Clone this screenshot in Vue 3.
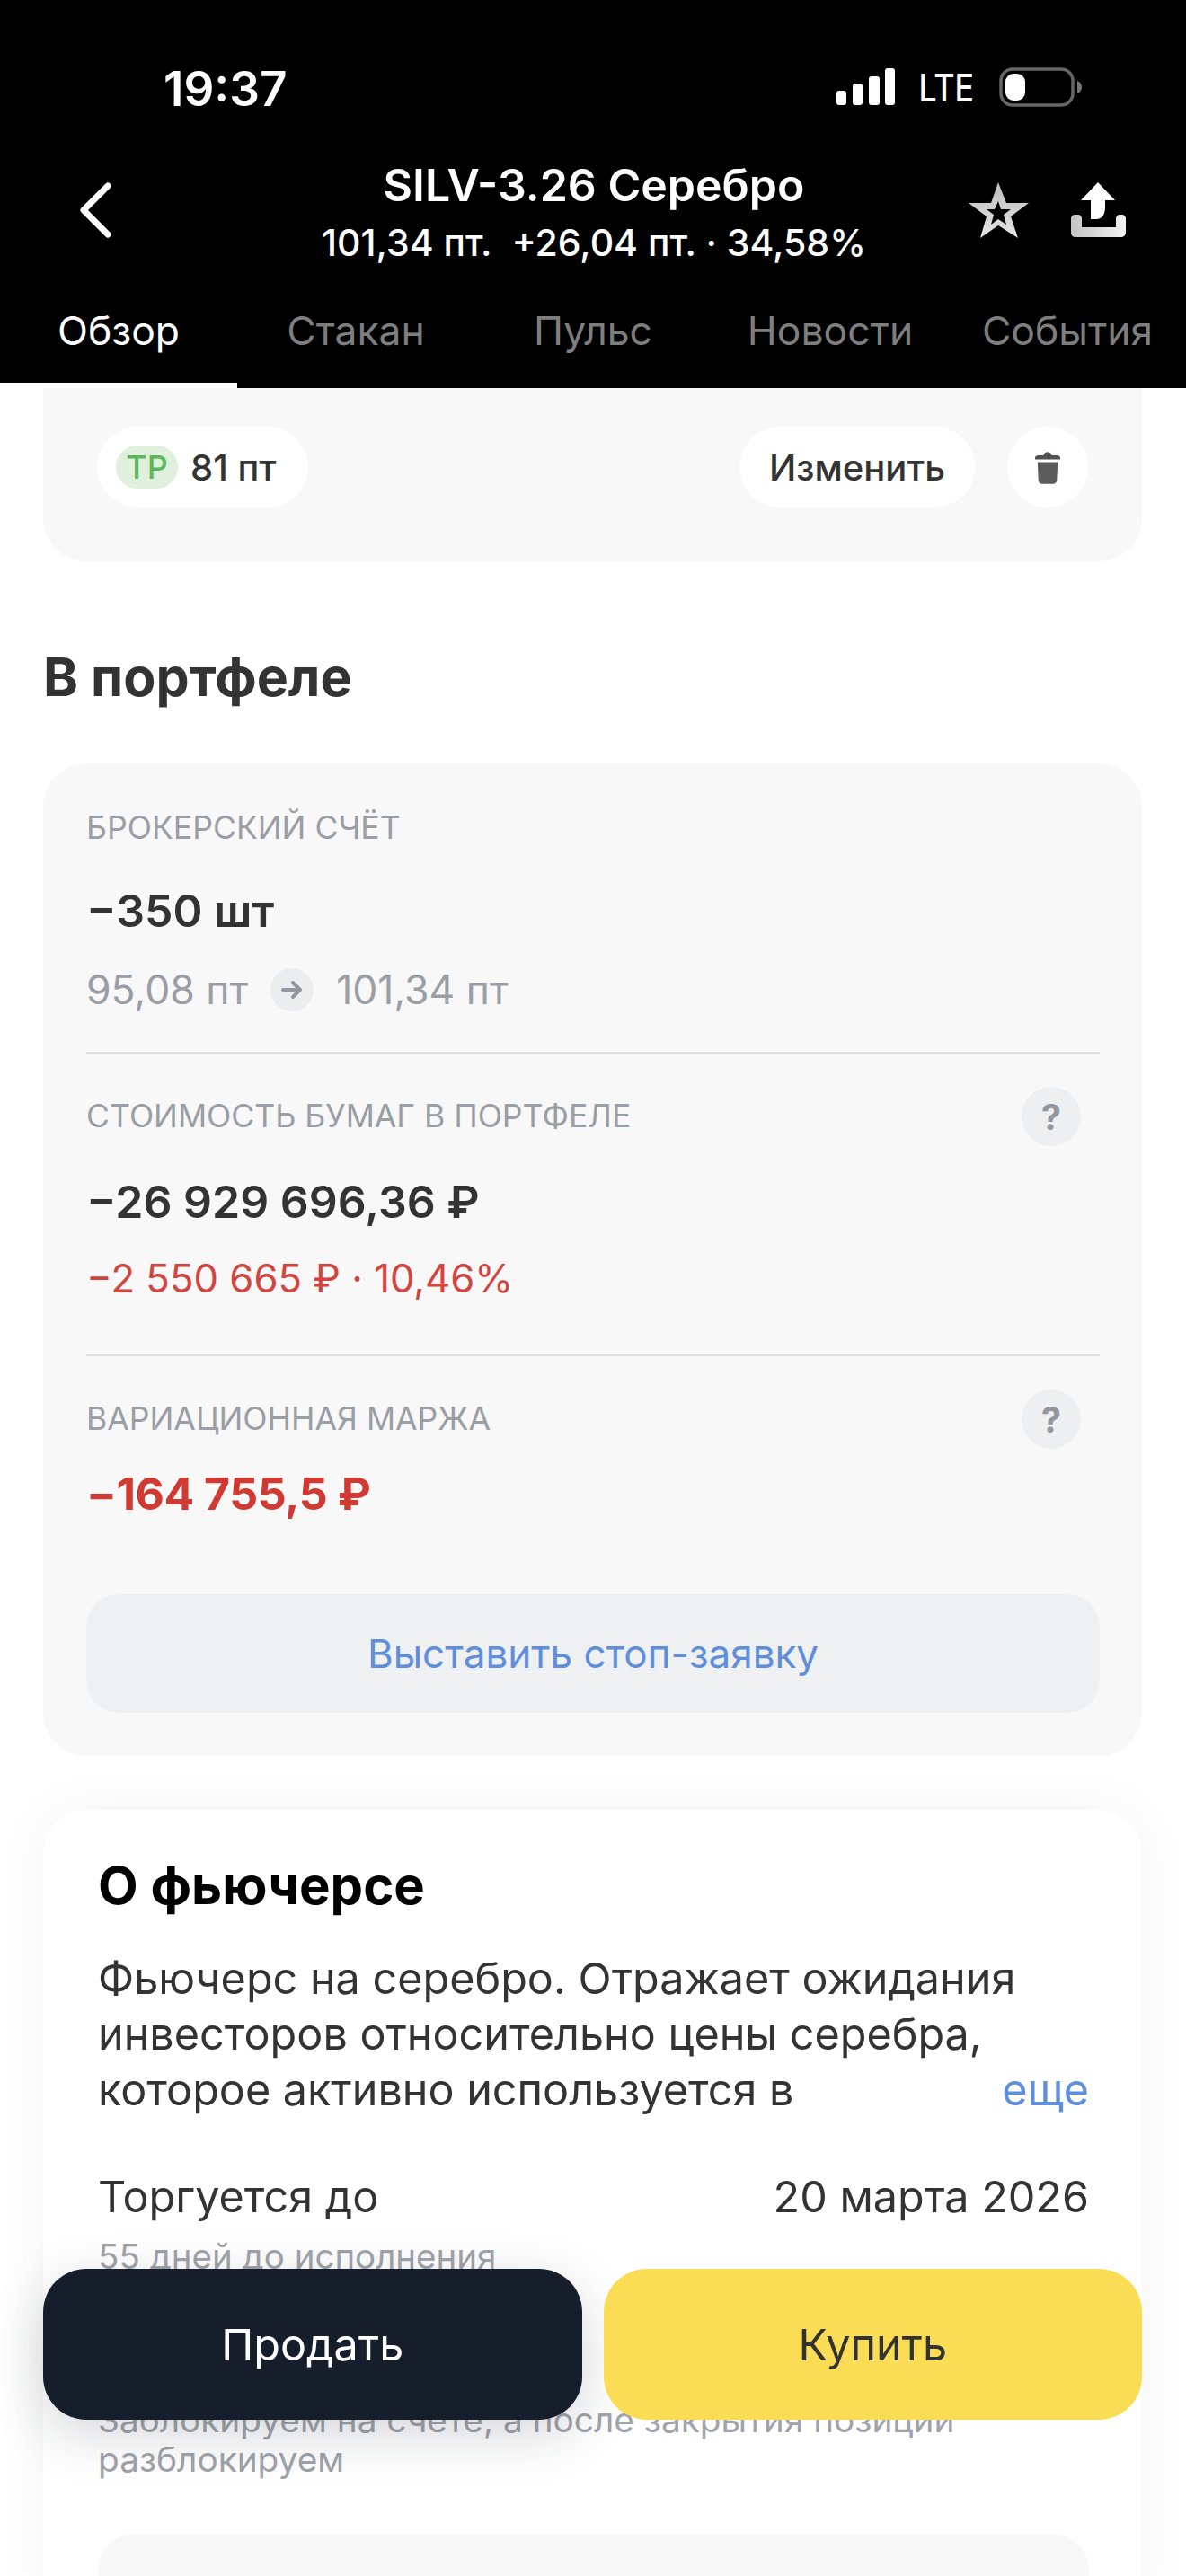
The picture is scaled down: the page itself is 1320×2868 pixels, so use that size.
<script setup>
const tabs = ['Обзор', 'Стакан', 'Пульс', 'Новости', 'События']
</script>

<template>
  <div class="phone">
    <header class="top">
      <div class="status">
        <span class="time">19:37</span>
        <div class="status-right">
          <svg class="signal" width="66" height="42" viewBox="0 0 66 42" fill="#fff">
            <rect x="0" y="25" width="11" height="16" rx="3" />
            <rect x="18" y="17" width="11" height="24" rx="3" />
            <rect x="36" y="9" width="12" height="32" rx="3" />
            <rect x="54" y="0" width="11" height="41" rx="3" />
          </svg>
          <span class="lte">LTE</span>
          <svg class="battery" width="92" height="44" viewBox="0 0 92 44">
            <rect x="2" y="2" width="80" height="40" rx="13" fill="none" stroke="#666" stroke-width="3.5" />
            <rect x="7" y="7" width="22" height="30" rx="9" fill="#fff" />
            <path d="M87 15c3 1 5 4 5 7s-2 6-5 7z" fill="#777" />
          </svg>
        </div>
      </div>
      <div class="nav">
        <svg class="back" width="36" height="62" viewBox="0 0 36 62" fill="none">
          <path d="M32 4 5 31l27 27" stroke="#fff" stroke-width="7" stroke-linecap="round" stroke-linejoin="round" />
        </svg>
        <div class="titles">
          <div class="title">SILV-3.26 Серебро</div>
          <div class="subtitle">101,34 пт.&nbsp; +26,04 пт. · 34,58%</div>
        </div>
        <svg class="star" width="68" height="64" viewBox="0 0 68 64">
          <defs>
            <linearGradient id="starFill" x1="0.5" y1="0" x2="0.5" y2="1">
              <stop offset="0" stop-color="#bdbdbd" />
              <stop offset="1" stop-color="#e6e6e6" />
            </linearGradient>
          </defs>
          <path fill="url(#starFill)" fill-rule="evenodd" d="M33 1l9 23h25L47 39l8 24-22-14-20 14 7-24L0 24h25zM33 22l-4 9H20l8 6-3 11 8-6 9 6-3-11 8-6h-11z" />
        </svg>
        <svg class="share" width="62" height="62" viewBox="0 0 62 62">
          <defs>
            <linearGradient id="trayFill" x1="0" y1="0" x2="1" y2="0">
              <stop offset="0" stop-color="#c4c4c4" />
              <stop offset="1" stop-color="#f2f2f2" />
            </linearGradient>
          </defs>
          <path fill="#fff" d="M30 0l19 20H38v8c0 7-3 13-10 13h-6V20H11z" />
          <path fill="url(#trayFill)" d="M4 36h4c2 0 4 2 4 4v10h38V40c0-2 2-4 4-4h3c2 0 4 2 4 4v16c0 3-3 5-5 5H5c-3 0-5-2-5-5V40c0-2 2-4 4-4z" />
        </svg>
      </div>
      <nav class="tabs">
        <span v-for="(tab, i) in tabs" :key="tab" class="tab" :class="{ active: i === 0 }">{{ tab }}</span>
      </nav>
    </header>

    <main class="content">
      <section class="card order">
        <div class="pill tp"><span class="tp-badge">ТР</span>81 пт</div>
        <div class="order-actions">
          <button class="pill edit">Изменить</button>
          <button class="pill trash">
            <svg width="28" height="38" viewBox="0 0 30 40">
              <path fill="#505050" d="M0 9c0-2 2-3 4-3h6c1-3 3-4 5-4s4 1 5 4h6c2 0 4 1 4 3v2H0z" />
              <path fill="#5c5c5c" d="M3 14h24l-1 22c0 2-2 4-4 4H8c-2 0-4-2-4-4z" />
            </svg>
          </button>
        </div>
      </section>

      <h2 class="section-title">В портфеле</h2>

      <section class="card portfolio">
        <div class="block first">
          <div class="label">БРОКЕРСКИЙ СЧЁТ</div>
          <div class="value">−350 шт</div>
          <div class="prices">
            <span>95,08 пт</span>
            <span class="arrow">
              <svg width="24" height="24" viewBox="0 0 24 24" fill="none">
                <path d="M2 12h18M13 4l8 8-8 8" stroke="#92969d" stroke-width="4" stroke-linecap="round" stroke-linejoin="round" />
              </svg>
            </span>
            <span>101,34 пт</span>
          </div>
        </div>
        <div class="block">
          <div class="label-row">
            <span class="label">СТОИМОСТЬ БУМАГ В ПОРТФЕЛЕ</span>
            <span class="hint">?</span>
          </div>
          <div class="value">−26 929 696,36 ₽</div>
          <div class="change">−2 550 665 ₽ · 10,46%</div>
        </div>
        <div class="block last">
          <div class="label-row">
            <span class="label">ВАРИАЦИОННАЯ МАРЖА</span>
            <span class="hint">?</span>
          </div>
          <div class="value red">−164 755,5 ₽</div>
        </div>
        <button class="stop">Выставить стоп-заявку</button>
      </section>

      <section class="card about">
        <h2 class="about-title">О фьючерсе</h2>
        <div class="desc">
          <p>Фьючерс на серебро. Отражает ожидания<br />инвесторов относительно цены серебра,</p>
          <p class="desc-last"><span>которое активно используется в</span><span class="more">еще</span></p>
        </div>
        <div class="term">
          <span>Торгуется до</span>
          <span>20 марта 2026</span>
        </div>
        <div class="note days">55 дней до исполнения</div>
        <div class="note blocked">Заблокируем на счёте, а после закрытия позиции<br />разблокируем</div>
        <div class="inner-box"></div>
      </section>
    </main>

    <div class="actions">
      <button class="action sell">Продать</button>
      <button class="action buy">Купить</button>
    </div>
  </div>
</template>

<style>
html, body { margin: 0; background: #fff; }
</style>

<style scoped>
.phone {
  position: relative;
  width: 1320px;
  height: 2868px;
  overflow: hidden;
  background: #fff;
  font-family: Inter, "Liberation Sans", sans-serif;
  color: #333;
}
button {
  border: 0;
  padding: 0;
  font-family: inherit;
}

/* header */
.top {
  height: 432px;
  background: #000;
  color: #fff;
  box-sizing: border-box;
  padding-top: 74px;
}
.status {
  height: 46px;
  display: flex;
  justify-content: space-between;
  align-items: center;
  padding: 0 116px 0 182px;
}
.time { font-size: 53px; font-weight: 600; position: relative; top: 2px; }
.status-right { display: flex; align-items: center; }
.lte { font-size: 42px; font-weight: 500; margin: 0 22px 0 20px; transform: scaleX(.85); }
.nav {
  display: flex;
  align-items: center;
  height: 124px;
  margin-top: 57px;
  padding: 0 66px 0 88px;
}
.back, .star, .share { margin-bottom: 10px; }
.titles { flex: 1; text-align: center; padding-left: 120px; white-space: nowrap; }
.title { font-size: 50px; font-weight: 600; line-height: 62px; margin-top: -2px; }
.subtitle { font-size: 41px; font-weight: 500; line-height: 62px; margin-top: 2px; }
.star { margin-right: 46px; }
.tabs {
  display: flex;
  margin-top: 37px;
  position: relative;
}
.tab {
  flex: 1;
  text-align: center;
  font-size: 44.4px;
  line-height: 60px;
  color: #7e7e7e;
}
.tab.active { color: #fff; }
.tabs::after {
  content: "";
  position: absolute;
  left: 0;
  top: 88px;
  width: 264px;
  height: 6px;
  background: #fff;
}

/* cards */
.content { padding: 0 49px 0 48px; }
.card { border-radius: 48px; background: #f8f8f8; }
.order {
  border-radius: 0 0 48px 48px;
  height: 193px;
  box-sizing: border-box;
  padding: 43px 60px 0;
  display: flex;
  justify-content: space-between;
  align-items: flex-start;
}
.order-actions { display: flex; gap: 36px; }
.pill {
  height: 90px;
  border-radius: 45px;
  background: #fff;
  display: flex;
  align-items: center;
  justify-content: center;
  font-size: 40px;
  font-weight: 500;
  color: #333;
}
.tp { width: 235px; box-sizing: border-box; padding-left: 21px; justify-content: flex-start; gap: 14px; }
.tp-badge {
  width: 69px;
  height: 48px;
  border-radius: 24px;
  background: #dff1dc;
  color: #5cb85c;
  font-size: 36px;
  display: flex;
  align-items: center;
  justify-content: center;
}
.edit { width: 262px; }
.trash { width: 90px; }
.section-title {
  margin: 96px 0 0;
  font-size: 59px;
  line-height: 66px;
  font-weight: 700;
  color: #333;
}
.portfolio {
  margin-top: 63px;
  padding: 0 47px 48px 48px;
  height: 1105px;
  box-sizing: border-box;
}
.block { border-bottom: 2px solid #dedfe1; height: 337px; box-sizing: border-box; padding-top: 37px; }
.block.first { height: 323px; padding-top: 32px; }
.block.last { border-bottom: 0; height: 265px; }
.label {
  font-size: 35.6px;
  line-height: 44px;
  color: #9a9ea5;
}
.first .label { display: block; padding-top: 18px; }
.label-row {
  display: flex;
  justify-content: space-between;
  align-items: center;
  height: 66px;
  padding-right: 21px;
}
.hint {
  width: 66px;
  height: 66px;
  border-radius: 50%;
  background: #eeeff1;
  color: #92969d;
  font-size: 40px;
  font-weight: 700;
  display: flex;
  align-items: center;
  justify-content: center;
}
.value {
  margin-top: 30px;
  font-size: 50px;
  line-height: 64px;
  font-weight: 600;
  color: #333;
}
.first .value { margin-top: 38px; }
.value.red { margin-top: 18px; color: #d13a33; font-weight: 700; letter-spacing: -0.5px; }
.prices {
  margin-top: 24px;
  display: flex;
  align-items: center;
  gap: 25px;
  font-size: 44.5px;
  line-height: 64px;
  color: #9a9ea5;
}
.arrow {
  width: 48px;
  height: 48px;
  border-radius: 50%;
  background: #ecedef;
  display: flex;
  align-items: center;
  justify-content: center;
}
.change {
  margin-top: 22px;
  font-size: 43.7px;
  line-height: 64px;
  color: #d2453e;
}
.stop {
  display: block;
  width: 100%;
  height: 132px;
  border-radius: 36px;
  background: #eff0f2;
  color: #5f8fdc;
  font-size: 44px;
}
.about {
  margin-top: 60px;
  background: #fff;
  padding: 50px 59px 0 61px;
  height: 900px;
  box-sizing: border-box;
  box-shadow: 0 0 60px rgba(0, 0, 0, .05);
}
.about-title {
  margin: 0;
  font-size: 58px;
  line-height: 68px;
  font-weight: 700;
  color: #000;
}
.desc {
  margin-top: 39px;
  font-size: 48.5px;
  line-height: 62px;
  color: #333;
}
.desc p { margin: 0; }
.desc-last { display: flex; justify-content: space-between; }
.more { color: #5f8fdc; }
.term {
  margin-top: 57px;
  display: flex;
  justify-content: space-between;
  font-size: 48.5px;
  line-height: 62px;
  color: #333;
}
.note {
  font-size: 38.5px;
  line-height: 44px;
  color: #a0a4aa;
}
.days { margin-top: 13px; }
.blocked { margin-top: 138px; font-size: 38.8px; }
.inner-box {
  margin-top: 61px;
  height: 200px;
  border-radius: 40px;
  background: #f8f8f8;
}

/* bottom buttons float over the page */
.actions {
  position: absolute;
  left: 48px;
  right: 49px;
  top: 2526px;
  display: flex;
  gap: 24px;
}
.action {
  flex: 1;
  height: 168px;
  border-radius: 48px;
  font-size: 48.5px;
}
.sell {
  background: #161d2b;
  color: #fff;
  box-shadow: 0 16px 60px rgba(22, 29, 43, .18);
}
.buy { background: #fadc55; color: #333; }
</style>
